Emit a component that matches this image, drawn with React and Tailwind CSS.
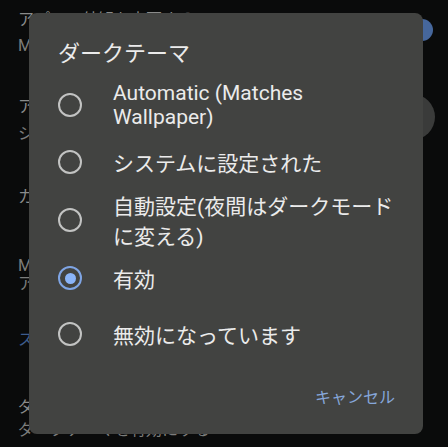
import { useState } from "react";

const options = [
  { id: "auto", label: ["Automatic (Matches", "Wallpaper)"], first: true },
  { id: "system", label: ["システムに設定された"] },
  { id: "night", label: ["自動設定(夜間はダークモード", "に変える)"] },
  { id: "on", label: ["有効"] },
  { id: "off", label: ["無効になっています"] },
];

function Radio({ checked }) {
  if (checked) {
    return (
      <span className="flex h-[24px] w-[24px] items-center justify-center rounded-full border-[2.5px] border-[#7fa5e4]">
        <span className="h-[11px] w-[11px] rounded-full bg-[#8ab4f8]" />
      </span>
    );
  }
  return <span className="block h-[24px] w-[24px] rounded-full border-[2.5px] border-[#c2c3c2]" />;
}

function BgLine({ children, mt, tone = "text-[#8a8b8a]" }) {
  return (
    <div className={`h-[18px] whitespace-nowrap text-[16px] leading-[18px] ${tone} ${mt}`}>{children}</div>
  );
}

export default function App() {
  const [value, setValue] = useState("on");

  return (
    <div className="relative h-[447px] w-full overflow-hidden bg-[#0a0b0b] font-['Roboto','Noto_Sans_CJK_JP',sans-serif]">
      {/* settings list behind the dialog */}
      <div className="flex flex-col pl-[18px] pt-[11px]">
        <BgLine mt="mt-0">アプリの外観を変更する</BgLine>
        <BgLine mt="mt-[8px]" tone="text-[#7c7d7c]">Material You</BgLine>
        <BgLine mt="mt-[43px]">アクセントカラー</BgLine>
        <BgLine mt="mt-[9px]" tone="text-[#7c7d7c]">システムのデフォルト</BgLine>
        <BgLine mt="mt-[45px]">カラーパレット</BgLine>
        <BgLine mt="mt-[51px]" tone="text-[#7c7d7c]">Material You</BgLine>
        <BgLine mt="mt-0" tone="text-[#7c7d7c]">アプリの色を壁紙に合わせる</BgLine>
        <BgLine mt="mt-[38px]" tone="text-[#3d5c8c]">スタイル</BgLine>
        <BgLine mt="mt-[49px]">ダークテーマ</BgLine>
        <BgLine mt="mt-[5px]" tone="text-[#7c7d7c]">ダークテーマを有効にする</BgLine>
      </div>

      {/* switch thumbs peeking out on the right */}
      <span className="absolute left-[411px] top-[19px] h-[22px] w-[22px] rounded-full bg-[#46679c]" />
      <span className="absolute left-[389px] top-[94px] h-[46px] w-[46px] rounded-full bg-[#3a3b3a]" />

      {/* dialog */}
      <div className="absolute left-[29px] top-[13px] flex w-[394px] flex-col rounded-[8px] bg-[#424341] pb-[20px] pl-[29px] pr-[28px] pt-[22px]">
        <h2 className="text-[22px] leading-[normal] text-[#ebebeb]">ダークテーマ</h2>

        <div className="mt-[9px] flex flex-col">
          {options.map((o) => (
            <button
              key={o.id}
              onClick={() => setValue(o.id)}
              className={`flex items-center text-left ${o.first ? "min-h-[58px]" : "min-h-[56px]"}`}
            >
              <span className="flex w-[55px] shrink-0">
                <Radio checked={value === o.id} />
              </span>
              <span className="text-[21px] leading-[normal] text-[#ebebeb]">
                {o.label.map((l, i) => (
                  <span key={i} className="block whitespace-nowrap">
                    {l}
                  </span>
                ))}
              </span>
            </button>
          ))}
        </div>

        <div className="mt-[16px] flex h-[36px] items-center justify-end">
          <button className="text-[16px] leading-[normal] text-[#86a7da]">キャンセル</button>
        </div>
      </div>
    </div>
  );
}
